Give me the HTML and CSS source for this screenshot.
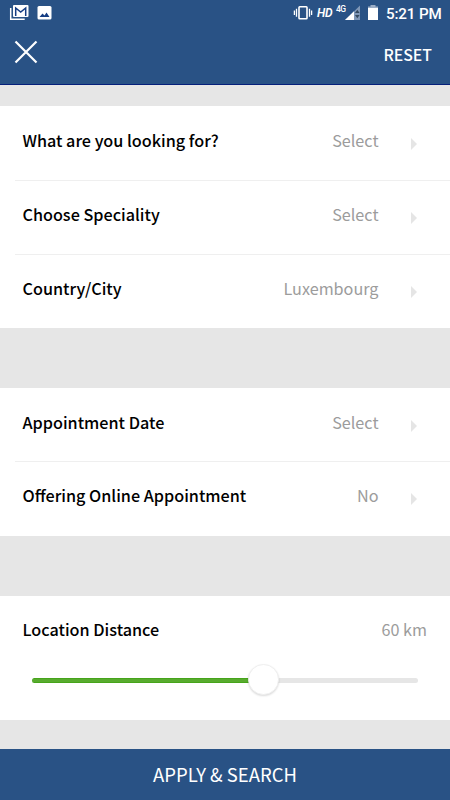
FILE: index.html
```
<!DOCTYPE html>
<html lang="en">
<head>
<meta charset="utf-8">
<title>Search filters</title>
<link rel="stylesheet" href="styles.css">
</head>
<body>
<div class="app">
  <header class="header">
    <div class="status">
      <svg class="notifications" width="52" height="24" viewBox="0 0 52 24">
        <path d="M10.7 8v11.2h14" fill="none" stroke="#fff" stroke-width="1.5"/>
        <rect x="13" y="5" width="15.5" height="12" rx="1" fill="#fff"/>
        <path d="M15.7 16V8l5 4 5-4v8" fill="none" stroke="#153d83" stroke-width="1.5"/>
        <rect x="37.5" y="6" width="14" height="13.5" rx="1.5" fill="#fff"/>
        <path d="M39.5 17l3-3.6 2 2 2-2.8 3 4.4z" fill="#153d83"/>
      </svg>
      <div class="indicators">
        <svg width="20" height="24" viewBox="0 0 20 24">
          <rect x="6" y="6.8" width="8" height="12" rx=".7" fill="none" stroke="#fff" stroke-width="1.6"/>
          <path d="M1.4 10.5v4.5M3.5 8.7v8M16.5 8.7v8M18.6 10.5v4.5" stroke="#fff" stroke-width="1.3"/>
        </svg>
        <span class="hd">HD</span>
        <span class="net">4G</span>
        <svg class="signal" width="15" height="24" viewBox="0 0 15 24">
          <path d="M0 20L15 5.5V20z" fill="#7f97b7"/>
          <path d="M0 20L9 11.2V20z" fill="#fff"/>
          <path d="M10 13l2.3-3.2L14.6 13zM10 15h4.6l-2.3 3.3z" fill="#34495f"/>
        </svg>
        <svg class="battery" width="10" height="24" viewBox="0 0 10 24">
          <path d="M2.5 5h5v1.5H10V9H0V6.5h2.5z" fill="#9badc6"/>
          <rect y="8" width="10" height="12" fill="#fff"/>
        </svg>
        <span class="time">5:21 PM</span>
      </div>
    </div>
    <div class="toolbar">
      <svg class="close" width="24" height="24" viewBox="0 0 24 24"><path d="M1.5 1.5l21 21M22.5 1.5l-21 21" stroke="#fff" stroke-width="2.2"/></svg>
      <span class="reset">RESET</span>
    </div>
  </header>

  <main class="content">
    <section class="group">
      <div class="row"><span class="label">What are you looking for?</span><span class="value">Select</span><i class="arrow"></i></div>
      <div class="row"><span class="label">Choose Speciality</span><span class="value">Select</span><i class="arrow"></i></div>
      <div class="row"><span class="label">Country/City</span><span class="value">Luxembourg</span><i class="arrow"></i></div>
    </section>
    <section class="group appointment">
      <div class="row"><span class="label">Appointment Date</span><span class="value">Select</span><i class="arrow"></i></div>
      <div class="row"><span class="label">Offering Online Appointment</span><span class="value">No</span><i class="arrow"></i></div>
    </section>
    <section class="group distance">
      <div class="distance-head"><span class="label">Location Distance</span><span class="value">60 km</span></div>
      <div class="slider"><div class="fill" style="width:60%"></div><div class="thumb"></div></div>
    </section>
  </main>

  <footer class="apply">APPLY &amp; SEARCH</footer>
</div>
</body>
</html>
```
FILE: styles.css
```
* { box-sizing: border-box; }
body {
  margin: 0;
  font-family: "Noto Sans CJK SC", "Noto Sans", sans-serif;
  background: #e6e6e6;
}
.app {
  width: 450px;
  height: 800px;
  display: flex;
  flex-direction: column;
  overflow: hidden;
}
.header {
  height: 85px;
  background: #295285;
  border-bottom: 1px solid #051f7a;
  color: #fff;
}
.status {
  height: 24px;
  display: flex;
  justify-content: space-between;
  padding-right: 9px;
  font-family: Roboto, sans-serif;
}
.indicators { display: flex; }
.hd {
  margin-left: 4px;
  width: 16px;
  font-size: 12px;
  font-weight: 600;
  font-style: italic;
  line-height: 26px;
  letter-spacing: -.3px;
}
.net {
  margin-left: 3px;
  width: 9px;
  font-size: 8.5px;
  font-weight: 500;
  line-height: 18px;
  letter-spacing: -.5px;
}
.battery { margin-left: 8px; }
.time {
  margin-left: 8px;
  width: 55px;
  font-size: 15.2px;
  font-weight: 500;
  line-height: 28px;
  letter-spacing: -.15px;
  white-space: nowrap;
}
.toolbar {
  height: 60px;
  display: flex;
  justify-content: space-between;
  padding: 16px 18px 0 14px;
}
.reset {
  font-size: 15.8px;
  font-weight: 500;
  line-height: 30px;
}
.content {
  flex: 1;
  display: flex;
  flex-direction: column;
  gap: 60px;
  padding-top: 21px;
}
.group { background: #fff; }
.row {
  height: 74px;
  display: flex;
  align-items: center;
  padding: 0 33px 6px 22.5px;
  background: linear-gradient(#efefef, #efefef) 15px 0 / 435px 1px no-repeat;
}
.row:first-child { background: none; }
.appointment { height: 148px; }
.appointment .row:first-child { height: 73px; }
.label {
  flex: 1;
  font-size: 16.2px;
  font-weight: 500;
  color: #000;
}
.value {
  font-size: 16.2px;
  font-weight: 400;
  color: #9c9c9c;
}
.arrow {
  margin: 8px 0 0 32.5px;
  border-left: 6px solid #e5e5e5;
  border-top: 6px solid transparent;
  border-bottom: 6px solid transparent;
}
.distance {
  height: 124.5px;
  margin-top: -.5px;
}
.distance-head {
  height: 68px;
  display: flex;
  align-items: center;
  padding: 0 23px 2px 22.5px;
}
.slider {
  height: 5px;
  margin: 14.5px 32px 0;
  display: flex;
  align-items: center;
  border-radius: 3px;
  background: #e6e6e6;
}
.fill {
  height: 5px;
  border-radius: 3px 0 0 3px;
  background: linear-gradient(#3da110, #58ab2f 30%, #58ab2f 70%, #3da110);
}
.thumb {
  width: 31px;
  height: 31px;
  margin: -2px 0 0 -16px;
  flex: none;
  border-radius: 50%;
  background: #fff;
  border: 1px solid #f0f0f0;
  box-shadow: 0 1px 2px rgba(0, 0, 0, .14);
}
.apply {
  height: 51px;
  background: #295285;
  color: #fff;
  font-size: 18.5px;
  line-height: 51px;
  text-align: center;
}
```
